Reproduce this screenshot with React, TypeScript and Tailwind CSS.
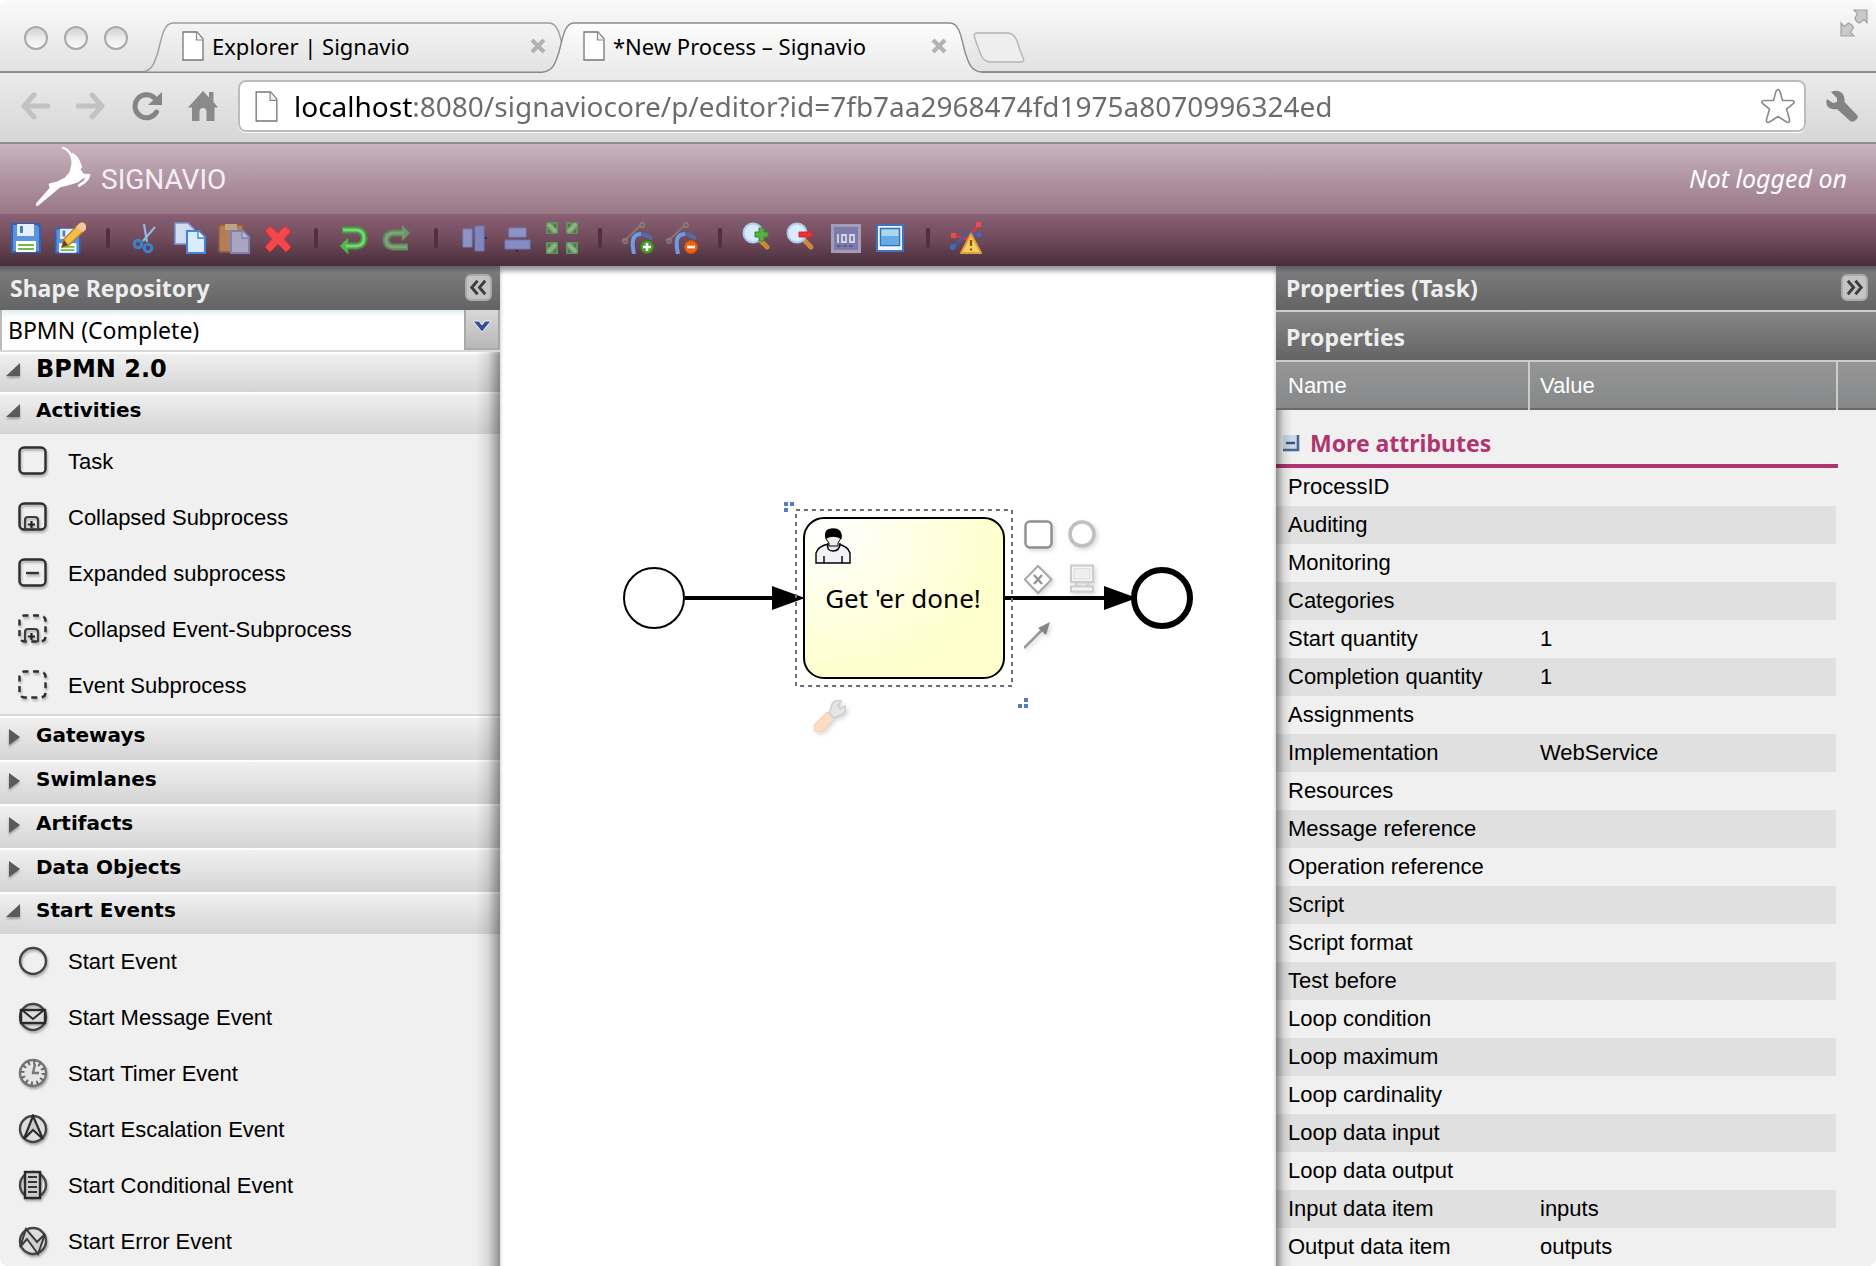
import React, { ReactNode } from "react";

const uiFont = "font-['Noto_Sans',sans-serif]";
const wideFont = "font-['DejaVu_Sans',sans-serif]";
const gridFont = "font-['Liberation_Sans',Arial,sans-serif]";

/* ---------- Browser chrome ---------- */

function PageIcon({ className }: { className: string }) {
  return (
    <svg viewBox="0 0 22 30" className={className} aria-hidden="true">
      <path d="M1 1h14l6 7v21H1z" fill="#fff" stroke="#777" strokeWidth="1.3" />
      <path d="M14.500 1v8H21" fill="#f4f4f4" stroke="#888" strokeWidth="1.2" />
    </svg>
  );
}

function TrafficLight({ label }: { label: string }) {
  return (
    <button
      aria-label={label}
      className="size-6 rounded-full border-2 border-[#a8a8a8] bg-linear-to-b from-[#d2d2d2] via-[#ececec] to-[#f8f8f8]"
    />
  );
}

function Tab({ title, active }: { title: string; active?: boolean }) {
  return (
    <div className={`relative flex h-[51px] w-[438px] shrink-0 items-center pr-[34px] pb-1 pl-10 ${active ? "z-10 -ml-[37px]" : ""}`}>
      <svg viewBox="0 0 438 51" preserveAspectRatio="none" className="absolute inset-0 h-full w-full" aria-hidden="true">
        <defs>
          <linearGradient id="tabOn" x1="0" y1="0" x2="0" y2="1">
            <stop offset="0" stopColor="#fdfdfd" />
            <stop offset="1" stopColor="#ebebeb" />
          </linearGradient>
          <linearGradient id="tabOff" x1="0" y1="0" x2="0" y2="1">
            <stop offset="0" stopColor="#f4f4f4" />
            <stop offset="1" stopColor="#e2e2e2" />
          </linearGradient>
        </defs>
        <path
          d="M0 50C10 49 12 42 16 30C20 14 22 1 31 1H407C416 1 418 14 422 30C426 42 428 49 438 50V51H0Z"
          fill={active ? "url(#tabOn)" : "url(#tabOff)"}
        />
        <path
          d="M0 50C10 49 12 42 16 30C20 14 22 1 31 1H407C416 1 418 14 422 30C426 42 428 49 438 50"
          fill="none"
          stroke={active ? "#8a8a8a" : "#9c9c9c"}
          strokeWidth="1.400"
        />
        {!active && <path d="M0 50.200H438" stroke="#8a8a8a" strokeWidth="1.600" />}
      </svg>
      <PageIcon className="relative h-[30px] w-[22px]" />
      <span className="relative ml-2 flex-1 text-[22px] leading-7 whitespace-nowrap text-black">{title}</span>
      <button aria-label={`Close ${title}`} className="relative size-4">
        <svg viewBox="0 0 16 16" aria-hidden="true">
          <path d="M2 2l12 12M14 2L2 14" stroke="#b2b2b2" strokeWidth="4.200" />
        </svg>
      </button>
    </div>
  );
}

function BrowserChrome() {
  return (
    <header className={uiFont}>
      <div className="flex h-[73px] border-b-2 border-[#8e8e8e] bg-linear-to-b from-[#fafafa] to-[#e2e2e2]">
        <div className="flex w-[142px] shrink-0 gap-4 pt-[26px] pl-6">
          <TrafficLight label="Close window" />
          <TrafficLight label="Minimise window" />
          <TrafficLight label="Zoom window" />
        </div>
        <div className="flex min-w-0 flex-1 pt-[22px]">
          <Tab title="Explorer | Signavio" />
          <Tab title="*New Process – Signavio" active />
          <button aria-label="New tab" className="-ml-2 mt-[10px] h-[32px] w-[52px]">
            <svg viewBox="0 0 52 32" aria-hidden="true">
              <path d="M4 1H34C42 1 44 8 47 18C50 26 53 30 48 30H18C10 30 8 24 5 15C2 7-1 1 4 1Z" fill="#eee" stroke="#b4b4b4" strokeWidth="1.400" />
            </svg>
          </button>
        </div>
        <button aria-label="Full screen" className="mt-[9px] mr-2 size-7 shrink-0">
          <svg viewBox="0 0 28 28" aria-hidden="true">
            <path
              d="M14 1H27V14L24 10.500L19.500 14Q16 13 15 9L17.500 4.500ZM1 14L4 17.500L8.500 14Q12 15 13.500 18.500L10.500 23.500L14 27H1Z"
              fill="#c9c9c9"
              stroke="#a2a2a2"
              strokeWidth="1.200"
            />
          </svg>
        </button>
      </div>

      <div className="flex h-[71px] items-center border-b-2 border-[#8e8e8e] bg-linear-to-b from-[#ebebeb] to-[#d6d6d6] pr-[18px] pb-[3px] pl-5">
        <nav aria-label="Browser" className="flex shrink-0 items-center gap-[26px]">
          <button aria-label="Back" className="size-[30px]">
            <svg viewBox="0 0 30 30" aria-hidden="true">
              <path d="M14 4L4 15L14 26M5 15H28" fill="none" stroke="#c2c2c2" strokeWidth="5" strokeLinecap="round" strokeLinejoin="round" />
            </svg>
          </button>
          <button aria-label="Forward" className="size-[30px]">
            <svg viewBox="0 0 30 30" aria-hidden="true">
              <path d="M16 4L26 15L16 26M25 15H2" fill="none" stroke="#c2c2c2" strokeWidth="5" strokeLinecap="round" strokeLinejoin="round" />
            </svg>
          </button>
          <button aria-label="Reload" className="size-[30px]">
            <svg viewBox="0 0 30 30" aria-hidden="true">
              <path d="M24.500 21A11.500 11.500 0 1 1 22 6.500" fill="none" stroke="#858585" strokeWidth="5" strokeLinecap="round" />
              <path d="M30 1V14H16Z" fill="#858585" />
            </svg>
          </button>
          <button aria-label="Home" className="size-[30px]">
            <svg viewBox="0 0 30 30" aria-hidden="true">
              <path d="M15 0L21 6.500V1H25.500V11L30 16.500H26.500V30H18.500V21Q18.500 17 15 17T11.500 21V30H4V16.500H0Z" fill="#8a8a8a" />
            </svg>
          </button>
        </nav>
        <div className="ml-5 flex h-[52px] min-w-0 flex-1 items-center rounded-lg border-2 border-[#bcbcbc] bg-white pr-2 pl-[15px] shadow-[0_1px_0_#fff]">
          <PageIcon className="h-[31px] w-[23px] shrink-0" />
          <input
            aria-label="Address"
            readOnly
            value="localhost:8080/signaviocore/p/editor?id=7fb7aa2968474fd1975a8070996324ed"
            className="ml-4 min-w-0 flex-1 bg-[linear-gradient(to_right,#000_119px,#6b6b6b_119px)] bg-clip-text text-[28px] leading-10 text-transparent outline-none"
          />
          <button aria-label="Bookmark this page" className="size-9">
            <svg viewBox="0 0 36 36" aria-hidden="true">
              <path
                d="M18 1.500Q19.500 1.500 20.500 5L22.500 12.500H32Q35.500 13 33.500 15.500L26.500 21L29.500 31.500Q30 35.500 26.500 34L18 28.500L9.500 34Q6 35.500 6.500 31.500L9.500 21L2.500 15.500Q.5 13 4 12.500H13.500L15.500 5Q16.500 1.500 18 1.500Z"
                fill="#fff"
                stroke="#8a8a8a"
                strokeWidth="1.600"
              />
            </svg>
          </button>
        </div>
        <button aria-label="Customise" className="ml-5 size-8 shrink-0">
          <svg viewBox="0 0 32 32" aria-hidden="true">
            <path d="M5 2L11 8V12L7 13L1 9Q-1 15 3.500 18Q7 20 11 19L24 31Q27 33 30 30T31 25L18.500 12Q19.500 7 16 3Q11-1 5 2Z" fill="#838383" />
          </svg>
        </button>
      </div>
    </header>
  );
}

/* ---------- Toolbar icons ---------- */

const floppy = (
  <>
    <path d="M2 2H27L30 5V30H2Z" fill="#5b93df" stroke="#2d63b4" strokeWidth="2" />
    <path d="M7 2H24V14H7Z" fill="#e6eefa" />
    <path d="M10 4h3v7h-3z" fill="#4a7cc6" />
    <path d="M6 19H26V30H6Z" fill="#fff" />
    <path d="M8 22H24V24H8ZM8 26H24V28H8Z" fill="#72ba45" />
  </>
);

const arrowPair = (x: number, y: number, rising: boolean) => (
  <g transform={`translate(${x} ${y})`}>
    <path d="M0 0H12V12H0Z" fill="#62905b" />
    <path d={rising ? "M10 2L2 10" : "M2 2L10 10"} stroke="#8db285" strokeWidth="4" />
    <path d={rising ? "M3 2v3M9 8v3" : "M9 2v3M3 8v3"} stroke="#4c6f47" strokeWidth="1.600" />
  </g>
);

const edgeIcon = (
  <>
    <path d="M2 19L19 3" stroke="#817a72" strokeWidth="1.800" />
    <circle cx="3" cy="19" r="2.200" fill="none" stroke="#8a8078" strokeWidth="1.400" />
    <circle cx="20" cy="3" r="2.200" fill="none" stroke="#8a8078" strokeWidth="1.400" />
    <path d="M18 12Q24 12 30 17" fill="none" stroke="#5469a8" strokeWidth="4" />
    <path d="M12 32C9 18 11 12 19 12" fill="none" stroke="#6b9ce4" strokeWidth="4" />
  </>
);

const lens = (
  <>
    <path d="M18 18L25 25" stroke="#c98a3c" strokeWidth="5" strokeLinecap="round" />
    <circle cx="11" cy="11" r="9.500" fill="#d9ebfc" stroke="#a9cdf0" strokeWidth="2" />
  </>
);

const icons: Record<string, ReactNode> = {
  Save: floppy,
  "Save as": (
    <>
      <g transform="translate(0 5) scale(.86)">{floppy}</g>
      <path d="M8 25L10 17L25 2Q28-1 31 2T31 8L15 23Z" fill="#f2bd49" stroke="#b67c27" strokeWidth="1.300" />
      <path d="M25 2Q28-1 31 2T31 8L29 10L22 5Z" fill="#efc7a4" />
      <path d="M8 25L10 18L14 23Z" fill="#5d4320" />
    </>
  ),
  Cut: (
    <>
      <path d="M14 2L17 20M25 5L13 19" stroke="#8fb9dc" strokeWidth="2.200" />
      <circle cx="8" cy="22" r="3.800" fill="none" stroke="#3a82ca" strokeWidth="3" />
      <circle cx="18" cy="26" r="3.800" fill="none" stroke="#3a82ca" strokeWidth="3" />
    </>
  ),
  Copy: (
    <>
      <path d="M1 1H14L20 7V22H1Z" fill="#cfdcf3" stroke="#7597d3" strokeWidth="1.500" />
      <path d="M13 9H25L31 15V31H13Z" fill="#d8ebff" stroke="#4583d8" strokeWidth="2" />
      <path d="M24 9V16H31" fill="#fff" stroke="#4583d8" strokeWidth="1.300" />
    </>
  ),
  Paste: (
    <>
      <rect x="1" y="3" width="24" height="27" rx="2" fill="#b27d58" stroke="#93603d" strokeWidth="1.500" />
      <path d="M7 2H19V8H7Z" fill="#c0a286" />
      <path d="M13 9H25L31 15V31H13Z" fill="#a9a5be" stroke="#7c83b4" strokeWidth="2" />
      <path d="M24 9V16H31" fill="#bdb8cb" stroke="#7c83b4" strokeWidth="1.300" />
    </>
  ),
  Delete: <path d="M8 4L16 11L23 4L29 9L22 17L29 25L24 30L16 22L8 30L3 25L10 17L3 9Z" fill="#f0484b" stroke="#e02c34" />,
  Undo: (
    <>
      <path d="M4 8H19Q26 9 26 16T19 24H10" fill="none" stroke="#3f9f3b" strokeWidth="7" />
      <path d="M2 24L10 16V32Z" fill="#56b44f" stroke="#3f9f3b" />
      <path d="M5 8H19Q26 9 26 16T19 24H8" fill="none" stroke="#84cf7b" strokeWidth="3" />
    </>
  ),
  Redo: (
    <>
      <path d="M26 25H11Q4 24 4 18T11 11H20" fill="none" stroke="#5f8a59" strokeWidth="7" />
      <path d="M28 11L20 3V19Z" fill="#6c9867" />
      <path d="M25 25H11Q4 24 4 18T11 11H22" fill="none" stroke="#82a27a" strokeWidth="3" />
    </>
  ),
  "Align vertically": (
    <>
      <path d="M5 7H14V25H5Z" fill="#8c93c6" stroke="#7880b8" />
      <path d="M17 4H26V29H17Z" fill="#7f86bd" stroke="#7077b0" />
      <path d="M27 16H29" stroke="#382534" strokeWidth="2" />
    </>
  ),
  "Align horizontally": (
    <>
      <path d="M7 6H24V15H7Z" fill="#8c93c6" stroke="#7880b8" />
      <path d="M3 18H28V27H3Z" fill="#858cc4" stroke="#7077b0" />
      <path d="M15 28v2" stroke="#382534" strokeWidth="2" />
    </>
  ),
  "Same size": (
    <>
      {arrowPair(0, 0, false)}
      {arrowPair(20, 0, true)}
      {arrowPair(0, 20, true)}
      {arrowPair(20, 20, false)}
    </>
  ),
  "Add docker": (
    <>
      {edgeIcon}
      <circle cx="25" cy="25" r="6.500" fill="#4c9e2b" stroke="#3a7f20" />
      <path d="M25 21V29M21 25H29" stroke="#fff" strokeWidth="2.600" />
    </>
  ),
  "Delete docker": (
    <>
      {edgeIcon}
      <circle cx="25" cy="25" r="6.500" fill="#ee6210" stroke="#c84f0c" />
      <path d="M21 25H29" stroke="#fff" strokeWidth="2.600" />
    </>
  ),
  "Zoom in": (
    <>
      {lens}
      <path d="M17 6H22V10H26V15H22V19H17V15H13V10H17Z" fill="#5aae45" stroke="#3a8a30" />
    </>
  ),
  "Zoom out": (
    <>
      {lens}
      <path d="M13 10H26V15H13Z" fill="#ee3036" stroke="#d8242c" />
    </>
  ),
  "Zoom to standard": (
    <>
      <rect x="2.500" y="3.500" width="27" height="26" fill="#7c7bab" stroke="#a59cb9" strokeWidth="3" />
      <path d="M8 12v9M12 13h4v7h-4zM20 13h4v7h-4z" fill="none" stroke="#d8d4e2" strokeWidth="1.800" />
      <path d="M7 24H25" stroke="#5b557f" strokeWidth="1.500" strokeDasharray="4 2" />
    </>
  ),
  "Zoom to fit": (
    <>
      <rect x="3" y="3" width="26" height="26" fill="#f0f6ff" stroke="#3b74c4" strokeWidth="2" />
      <rect x="6.500" y="6.500" width="19" height="17" fill="#a8d8f6" stroke="#3c6ba6" strokeWidth="1.500" />
      <path d="M7 14H25V23H7Z" fill="#62ace8" />
    </>
  ),
  "Check syntax": (
    <>
      <path d="M3 13L16 17L29 3" fill="none" stroke="#e5363e" strokeWidth="2" />
      <path d="M3 25L17 11L29 13" fill="none" stroke="#3563b6" strokeWidth="2" />
      <path d="M1 11h5v5H1zM26 0h5v5h-5z" fill="#f04a50" />
      <circle cx="3" cy="25" r="3" fill="#3d6bbf" />
      <circle cx="29" cy="13" r="2.500" fill="#3d6bbf" />
      <path d="M21 12L31 31H11Z" fill="#f5d15c" stroke="#e0a03c" strokeWidth="2" strokeLinejoin="round" />
      <path d="M21 18V24M21 26.500V28.500" stroke="#7c5413" strokeWidth="2.200" />
    </>
  ),
};

const toolbarGroups = [
  ["Save", "Save as"],
  ["Cut", "Copy", "Paste", "Delete"],
  ["Undo", "Redo"],
  ["Align vertically", "Align horizontally", "Same size"],
  ["Add docker", "Delete docker"],
  ["Zoom in", "Zoom out", "Zoom to standard", "Zoom to fit"],
  ["Check syntax"],
];

function AppHeader() {
  return (
    <div>
      <div className="flex h-[70px] items-start justify-between bg-linear-to-b from-[#c8b4be] via-[#b094a2] to-[#987786] pr-[29px] pl-9">
        <div className="flex items-center">
          <svg viewBox="0 0 56 64" className="h-16 w-14" aria-hidden="true">
            <path
              d="M26 3Q32 4 35 9L37 14L36 9Q42 12 43 16L46 23L44 25L46 28L47 30L54 30.500Q53 36 50 38L43 43L42 41L48 37L50 33Q46 34 42 38L32 41L24 43L17 49L11 54L1 62L0 60L6 53L14 44L13 40L21 38L29 34L34 28L36 19L35 13Q32 6 26 4Z"
              fill="#fff"
              stroke="#fff"
              strokeWidth=".8"
            />
          </svg>
          <span className="ml-[9px] pt-2 font-['Roboto',sans-serif] text-[28px] leading-9 text-[#f5eef2]">SIGNAVIO</span>
        </div>
        <span className={`${uiFont} pt-[18px] text-[25px] leading-8 text-white italic`}>Not logged on</span>
      </div>
      <div role="toolbar" aria-label="Editor" className="flex h-[52px] items-center gap-3 bg-linear-to-b from-[#8a6074] via-[#6f4a5b] to-[#4a2d3b] px-[10px] pt-2 pb-3">
        {toolbarGroups.map((group, i) => (
          <React.Fragment key={i}>
            {i > 0 && <span className="mx-2 h-5 w-1 shrink-0 rounded-sm bg-[#4e303f]" />}
            {group.map((name) => (
              <button key={name} aria-label={name} title={name} className="size-8 shrink-0">
                <svg viewBox="0 0 32 32" aria-hidden="true">
                  {icons[name]}
                </svg>
              </button>
            ))}
          </React.Fragment>
        ))}
      </div>
    </div>
  );
}

/* ---------- Shape repository ---------- */

function CollapseButton({ label, flip }: { label: string; flip?: boolean }) {
  return (
    <button aria-label={label} className="size-[27px] rounded-md border-2 border-[#aaa] bg-[#c4c4c4]">
      <svg viewBox="0 0 24 24" aria-hidden="true">
        <path
          d={flip ? "M5 5L11 12L5 19M13 5L19 12L13 19" : "M11 5L5 12L11 19M19 5L13 12L19 19"}
          fill="none"
          stroke="#3d3d3d"
          strokeWidth="3"
        />
      </svg>
    </button>
  );
}

const box = <rect x="1.500" y="1.500" width="26" height="26" rx="4.500" fill="none" stroke="#2e2e2e" strokeWidth="2.400" />;
const dashedBox = (
  <rect x="1.500" y="1.500" width="26" height="26" rx="5" fill="none" stroke="#2e2e2e" strokeWidth="2.400" strokeDasharray="6 4.500" strokeDashoffset="2" />
);
const subMarker = (
  <>
    <path d="M7 28V18Q7 15 10 15H17Q20 15 20 18V28" fill="none" stroke="#3d3d3d" strokeWidth="2.200" />
    <path d="M13.500 19V26M10 22.500H17" stroke="#222" strokeWidth="2.200" />
  </>
);
const ring = <circle cx="15" cy="15" r="13" fill="none" stroke="#454545" strokeWidth="2.400" />;

const shapeIcons: Record<string, ReactNode> = {
  Task: box,
  "Collapsed Subprocess": (
    <>
      {box}
      {subMarker}
    </>
  ),
  "Expanded subprocess": (
    <>
      {box}
      <path d="M8 15H21" stroke="#333" strokeWidth="2.400" />
    </>
  ),
  "Collapsed Event-Subprocess": (
    <>
      {dashedBox}
      {subMarker}
    </>
  ),
  "Event Subprocess": dashedBox,
  "Start Event": ring,
  "Start Message Event": (
    <>
      {ring}
      <rect x="3" y="8" width="24" height="13" fill="#ddd" stroke="#2a2a2a" strokeWidth="2.400" />
      <path d="M4 8L15 17L26 8" fill="none" stroke="#2a2a2a" strokeWidth="2" />
    </>
  ),
  "Start Timer Event": (
    <>
      <circle cx="15" cy="15" r="13" fill="#e6e6e6" stroke="#757575" strokeWidth="2.400" />
      <circle cx="15" cy="15" r="10.500" fill="none" stroke="#666" strokeWidth="4" strokeDasharray="2 3.498" />
      <path d="M17 6L15 15H21" fill="none" stroke="#777" strokeWidth="2.400" />
    </>
  ),
  "Start Escalation Event": (
    <>
      <circle cx="15" cy="15" r="13" fill="#ddd" stroke="#454545" strokeWidth="2.400" />
      <path d="M15 2L6 25L15 16L25 25Z" fill="#ccc" stroke="#2c2c2c" strokeWidth="2.200" />
    </>
  ),
  "Start Conditional Event": (
    <>
      {ring}
      <rect x="7" y="2" width="15" height="26" fill="#ccc" stroke="#2a2a2a" strokeWidth="2.400" />
      <path d="M10 7H19M10 12H19M10 17H19M10 22H19" stroke="#333" strokeWidth="2" />
    </>
  ),
  "Start Error Event": (
    <>
      <circle cx="15" cy="15" r="13" fill="#ddd" stroke="#454545" strokeWidth="2.400" />
      <path d="M2 21L8 3L19 16L27 8L20 28L9 13Z" fill="#d0d0d0" stroke="#3a3a3a" strokeWidth="2" />
    </>
  ),
};

type Section = { title: string; items?: string[]; large?: boolean; open: boolean };

const sections: Section[] = [
  { title: "BPMN 2.0", open: true, large: true },
  {
    title: "Activities",
    open: true,
    items: ["Task", "Collapsed Subprocess", "Expanded subprocess", "Collapsed Event-Subprocess", "Event Subprocess"],
  },
  { title: "Gateways", open: false },
  { title: "Swimlanes", open: false },
  { title: "Artifacts", open: false },
  { title: "Data Objects", open: false },
  {
    title: "Start Events",
    open: true,
    items: [
      "Start Event",
      "Start Message Event",
      "Start Timer Event",
      "Start Escalation Event",
      "Start Conditional Event",
      "Start Error Event",
    ],
  },
];

function RepositorySection({ title, items, open, large }: Section) {
  return (
    <section>
      <button
        aria-expanded={open}
        className={`${wideFont} flex w-full items-center border-t-2 border-white bg-linear-to-b from-[#f0f0f0] to-[#d4d4d4] pl-[5px] text-left font-bold text-black ${
          large ? "h-10 pb-2 text-2xl leading-8" : items ? "h-[42px] pb-2 text-xl leading-8" : "h-11 pb-2 text-xl leading-8"
        }`}
      >
        <svg viewBox="0 0 18 18" className="mt-1 mr-[13px] size-[18px] drop-shadow-[0_2px_1px_rgba(0,0,0,.3)]" aria-hidden="true">
          <path d={open ? "M15 1V14H1Z" : "M4 1V17L15 9Z"} fill="#5a5a5a" />
        </svg>
        {title}
      </button>
      {items && (
        <ul className={`${gridFont} border-b-2 border-[#d8d8d8] text-[22px] text-black`}>
          {items.map((item) => (
            <li key={item}>
              <button className="flex h-14 w-full items-center pl-[18px] text-left leading-7">
                <svg viewBox="0 0 32 32" className="mr-[18px] size-8 drop-shadow-[1px_2px_1px_rgba(0,0,0,.3)]" aria-hidden="true">
                  {shapeIcons[item]}
                </svg>
                {item}
              </button>
            </li>
          ))}
        </ul>
      )}
    </section>
  );
}

function ShapeRepository() {
  return (
    <aside className="flex w-[500px] shrink-0 flex-col bg-[#f0f0f0]">
      <div className={`${uiFont} flex h-11 shrink-0 items-center justify-between bg-linear-to-b from-[#5c5c5c] via-[#7a7a7a] via-15% to-[#646464] pr-2 pb-px pl-[10px]`}>
        <h2 className="text-[23px] leading-8 font-bold text-[#eee]">Shape Repository</h2>
        <CollapseButton label="Collapse shape repository" />
      </div>
      <div className="relative flex h-10 shrink-0 border-l-2 border-[#bbb]">
        <select
          aria-label="Stencil set"
          className={`${uiFont} w-full appearance-none bg-white bg-linear-to-b from-[#e4edf0] to-white to-20% pl-[6px] text-[23px] leading-8 text-black`}
        >
          <option>BPMN (Complete)</option>
        </select>
        <span className="pointer-events-none absolute inset-y-0 right-0 flex w-9 justify-center border-2 border-t-0 border-[#a9a9a9] bg-linear-to-b from-[#d8d8d8] to-[#b8b8b8] pt-2">
          <svg viewBox="0 0 20 16" className="h-4 w-5" aria-hidden="true">
            <path d="M1 3H7L10 7L13 3H19L10 14Z" fill="#2f4f9b" stroke="#f1f1f1" strokeWidth="1" />
          </svg>
        </span>
      </div>
      <div className="relative min-h-0 flex-1 overflow-hidden border-t-2 border-[#d8d8d8]">
        {sections.map((s) => (
          <RepositorySection key={s.title} {...s} />
        ))}
        <div className="pointer-events-none absolute inset-y-0 right-0 w-6 bg-linear-to-r from-transparent via-black/10 to-black/40" />
      </div>
    </aside>
  );
}

/* ---------- Canvas ---------- */

function MorphButton({ label, className, children }: { label: string; className: string; children: ReactNode }) {
  return (
    <button aria-label={label} className={`absolute size-8 ${className}`}>
      <svg viewBox="0 0 32 32" className="drop-shadow-[2px_2px_2px_rgba(0,0,0,.15)]" aria-hidden="true">
        {children}
      </svg>
    </button>
  );
}

function Canvas() {
  return (
    <main className="relative min-w-0 flex-1 bg-white shadow-[inset_0_6px_5px_-1px_#999]">
      <div className="absolute top-[214px] left-[100px] h-[270px] w-[620px]">
        <svg viewBox="0 0 620 270" className="h-full w-full">
          <defs>
            <radialGradient id="taskFill" cx="0.1" cy="0.1" r="0.9">
              <stop offset="0" stopColor="#fff" />
              <stop offset="1" stopColor="#ffffcc" />
            </radialGradient>
          </defs>
          <circle cx="54" cy="118" r="30" fill="#fff" stroke="#000" strokeWidth="2" />
          <path d="M85 118H180M404 118H510" stroke="#000" strokeWidth="4" />
          <rect x="204" y="38" width="200" height="160" rx="20" fill="url(#taskFill)" stroke="#000" strokeWidth="2" />
          <path d="M172 106L205 118L172 130ZM504 106L537 118L504 130Z" />
          <rect x="196" y="30" width="216" height="176" fill="none" stroke="#6f6f6f" strokeWidth="2" strokeDasharray="4 4" />
          <circle cx="562" cy="118" r="28" fill="#fff" stroke="#000" strokeWidth="6" />
          <g stroke="#000" strokeWidth="1.400">
            <path d="M216 83V73Q218 66 229 64H237Q248 66 250 73V83Z" fill="#f1f1f6" />
            <path d="M224 83V76M242 83V76" />
            <path d="M228 63Q226 71 233 71T240 63" fill="#e8e8ec" />
            <path d="M226 55Q226 61 229 63V66H238V63Q241 60 241 55Z" fill="#eee" strokeWidth="1" />
            <path d="M226 58Q224 49 233 49T241 58Q233 54 226 58Z" fill="#000" />
          </g>
          <text x="303" y="128" textAnchor="middle" className="font-['Noto_Sans',sans-serif] text-[26px]">
            Get 'er done!
          </text>
          <path d="M184 22h4v4h-4zM190 22h4v4h-4zM184 28h4v4h-4zM424 218h4v4h-4zM418 224h4v4h-4zM424 224h4v4h-4z" fill="#4f80bd" />
        </svg>
        <MorphButton label="Append task" className="top-10 left-[424px]">
          <rect x="1.500" y="1.500" width="26" height="26" rx="4.500" fill="#fff" stroke="#8e8e8e" strokeWidth="2.400" />
        </MorphButton>
        <MorphButton label="Append event" className="top-10 left-[468px]">
          <circle cx="14" cy="14" r="12" fill="#fff" stroke="#c0c0c0" strokeWidth="3.600" />
        </MorphButton>
        <MorphButton label="Append gateway" className="top-[84px] left-[424px]">
          <path d="M14 2L27.500 15.500L14 29L.8 15.500Z" fill="#fff" stroke="#a8a8a8" strokeWidth="2" />
          <path d="M10 11L18 20M18 11L10 20" stroke="#999" strokeWidth="2.600" />
        </MorphButton>
        <MorphButton label="Append data object" className="top-[84px] left-[468px]">
          <path d="M3 1.500H25V18H3ZM3 22.500H25V27.500H3Z" fill="#f5f5f5" stroke="#ccc" strokeWidth="2" />
          <path d="M8 18V22M20 18V22" stroke="#ccc" strokeWidth="2" />
          <path d="M6 4.500H22V15H6Z" fill="#efefef" stroke="#ddd" strokeWidth="1" />
        </MorphButton>
        <MorphButton label="Connect" className="top-[142px] left-[424px]">
          <path d="M0 26L19 7" stroke="#999" strokeWidth="2.600" />
          <path d="M26 0L22 13L14 6Z" fill="#858585" />
        </MorphButton>
        <MorphButton label="Change type" className="top-[220px] left-[214px]">
          <path d="M0 25L13 12L20 19L8 32H2Q0 31 0 29Z" fill="#fcdcc4" stroke="#f9cba8" />
          <path d="M17 8Q17 2 24 0L27 1L24 6L26 9L31 6Q33 15 24 16L20 18L15 13Z" fill="#e6e6e6" stroke="#ccc" strokeWidth="1.400" />
        </MorphButton>
      </div>
    </main>
  );
}

/* ---------- Properties ---------- */

const properties: [string, string][] = [
  ["ProcessID", ""],
  ["Auditing", ""],
  ["Monitoring", ""],
  ["Categories", ""],
  ["Start quantity", "1"],
  ["Completion quantity", "1"],
  ["Assignments", ""],
  ["Implementation", "WebService"],
  ["Resources", ""],
  ["Message reference", ""],
  ["Operation reference", ""],
  ["Script", ""],
  ["Script format", ""],
  ["Test before", ""],
  ["Loop condition", ""],
  ["Loop maximum", ""],
  ["Loop cardinality", ""],
  ["Loop data input", ""],
  ["Loop data output", ""],
  ["Input data item", "inputs"],
  ["Output data item", "outputs"],
];

function PropertiesPanel() {
  return (
    <aside className="flex w-[600px] shrink-0 flex-col bg-[#f0f0f0]">
      <div className={`${uiFont} flex h-[46px] shrink-0 items-center justify-between border-b-2 border-[#ccc] bg-linear-to-b from-[#5c5c5c] via-[#7a7a7a] via-15% to-[#646464] pr-2 pb-px pl-[10px]`}>
        <h2 className="text-[23px] leading-8 font-bold text-[#eee]">Properties (Task)</h2>
        <CollapseButton label="Collapse properties" flip />
      </div>
      <div className={`${uiFont} flex h-[50px] shrink-0 items-center border-b-2 border-[#ccc] bg-linear-to-b from-[#868686] to-[#646464] pt-[2px] pl-[10px]`}>
        <h3 className="text-[23px] leading-8 font-bold text-[#eee]">Properties</h3>
      </div>
      <div className="relative min-h-0 flex-1 overflow-hidden">
        <table className={`${gridFont} w-full table-fixed border-separate border-spacing-0 text-left text-[22px] leading-7 text-black`}>
          <colgroup>
            <col className="w-[254px]" />
            <col />
            <col className="w-[38px]" />
          </colgroup>
          <thead>
            <tr className="h-12 bg-linear-to-b from-[#959595] to-[#868889] text-white shadow-[inset_0_-2px_0_#6a6a6a]">
              <th className="border-r-2 border-[#ccc] py-0 pl-3 font-normal">Name</th>
              <th className="border-r-2 border-[#ccc] py-0 pl-[10px] font-normal">Value</th>
              <th aria-label="Scroll" />
            </tr>
          </thead>
          <tbody>
            <tr className="h-[58px]">
              <th colSpan={2} className={`${uiFont} border-b-4 border-[#b0346f] p-0 pt-3 pl-[6px]`}>
                <button aria-expanded="true" className="flex items-center text-[23px] leading-8 font-bold text-[#b0346f]">
                  <svg viewBox="0 0 18 18" className="mr-[10px] size-[18px]" aria-hidden="true">
                    <path d="M1 1H17V17H1Z" fill="#c8d8ea" />
                    <path d="M16 1V16H1" fill="none" stroke="#4b6890" strokeWidth="2.600" />
                    <path d="M4 9H13" stroke="#3a5378" strokeWidth="2.400" />
                  </svg>
                  More attributes
                </button>
              </th>
              <td />
            </tr>
            {properties.map(([name, value], i) => (
              <tr key={name} className="h-[38px]">
                <td className={`p-0 pl-3 ${i % 2 ? "bg-[#e0e0e0]" : ""}`}>{name}</td>
                <td className={`border-r-2 border-[#f0f0f0] p-0 pl-[10px] ${i % 2 ? "bg-[#e0e0e0]" : ""}`}>{value}</td>
                <td />
              </tr>
            ))}
          </tbody>
        </table>
        <div className="pointer-events-none absolute top-12 bottom-0 left-0 w-4 bg-linear-to-l from-transparent via-black/10 to-black/40" />
      </div>
    </aside>
  );
}

export default function App() {
  return (
    <div className="flex h-screen flex-col overflow-hidden rounded-lg bg-white">
      <BrowserChrome />
      <AppHeader />
      <div className="flex min-h-0 flex-1">
        <ShapeRepository />
        <Canvas />
        <PropertiesPanel />
      </div>
    </div>
  );
}
